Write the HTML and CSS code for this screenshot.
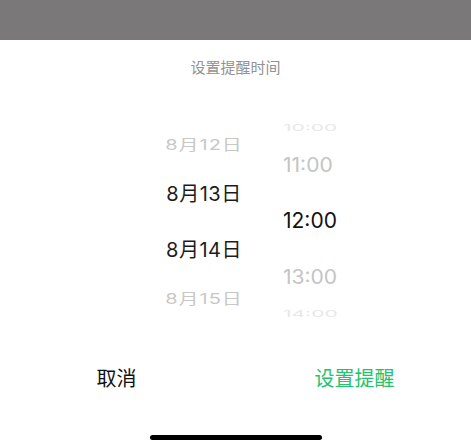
FILE: index.html
```html
<!DOCTYPE html>
<html lang="zh-CN">
<head>
    <meta charset="UTF-8">
    <meta name="viewport" content="width=device-width, initial-scale=1.0">
    <title>设置提醒时间</title>
    <link rel="stylesheet" href="styles.css">
</head>
<body>
    <div class="mask"></div>
    <div class="sheet">
        <div class="title">设置提醒时间</div>

        <div class="picker">
            <div class="col col-date">
                <div class="item far"><span>8月12日</span></div>
                <div class="item sel"><span>8月13日</span></div>
                <div class="item sel"><span>8月14日</span></div>
                <div class="item far"><span>8月15日</span></div>
            </div>
            <div class="col col-time">
                <div class="item edge"><span>10:00</span></div>
                <div class="item near"><span>11:00</span></div>
                <div class="item sel"><span>12:00</span></div>
                <div class="item near"><span>13:00</span></div>
                <div class="item edge"><span>14:00</span></div>
            </div>
        </div>

        <div class="actions">
            <button class="btn btn-cancel">取消</button>
            <button class="btn btn-ok">设置提醒</button>
        </div>

        <div class="home-bar"></div>
    </div>
</body>
</html>
```

FILE: styles.css
```css
body {
    margin: 0;
    width: 471px;
    height: 444px;
    overflow: hidden;
    background-color: #fff;
    font-family: Inter, "Noto Sans CJK SC", sans-serif;
}
.mask {
    height: 40px;
    background-color: #7a7879;
}
.sheet {
    display: flex;
    flex-direction: column;
    align-items: stretch;
}
.title {
    padding-top: 18px;
    line-height: 20px;
    font-size: 15px;
    color: #929292;
    text-align: center;
}

/* wheel picker */
.picker {
    margin-top: 40px;
    height: 204px;
    display: flex;
    align-items: center;
    padding-left: 154px;
    gap: 29px;
}
.col {
    display: flex;
    flex-direction: column;
    overflow: hidden;
}
.col-date {
    width: 100px;
    text-align: center;
}
.col-time {
    width: 70px;
    text-align: left;
}
.item {
    display: flex;
    align-items: center;
    justify-content: center;
    white-space: nowrap;
}
.col-time .item {
    justify-content: flex-start;
}
.item span {
    display: inline-block;
}
.col-date .item {
    font-size: 20px;
    letter-spacing: 0.5px;
}
.col-date .sel {
    height: 56px;
    color: #1c1c1c;
}
.col-date .far {
    height: 42px;
    color: #c8c8c8;
}
.col-date .far span {
    transform: scaleY(0.72);
    letter-spacing: 1px;
}
.col-time .item {
    font-size: 21px;
}
.col-time .sel {
    height: 56px;
    color: #111;
}
.col-time .near {
    height: 56px;
    color: #c4c4c4;
}
.col-time .near span {
    transform: scaleY(0.95);
}
.col-time .edge {
    height: 18px;
    color: #e8e8e8;
}
.col-time .edge span {
    transform: scaleY(0.45);
}

/* buttons */
.actions {
    margin-top: 44px;
    display: flex;
}
.btn {
    flex: 1;
    padding: 0;
    border: none;
    background: none;
    font-family: "Noto Sans CJK SC", sans-serif;
    font-size: 20px;
    line-height: 24px;
    cursor: pointer;
}
.btn-cancel {
    color: #111;
    padding-right: 5px;
}
.btn-ok {
    color: #22c36b;
}
.home-bar {
    margin: 45px auto 0;
    width: 172px;
    height: 5px;
    border-radius: 3px;
    background-color: #000;
}
```
